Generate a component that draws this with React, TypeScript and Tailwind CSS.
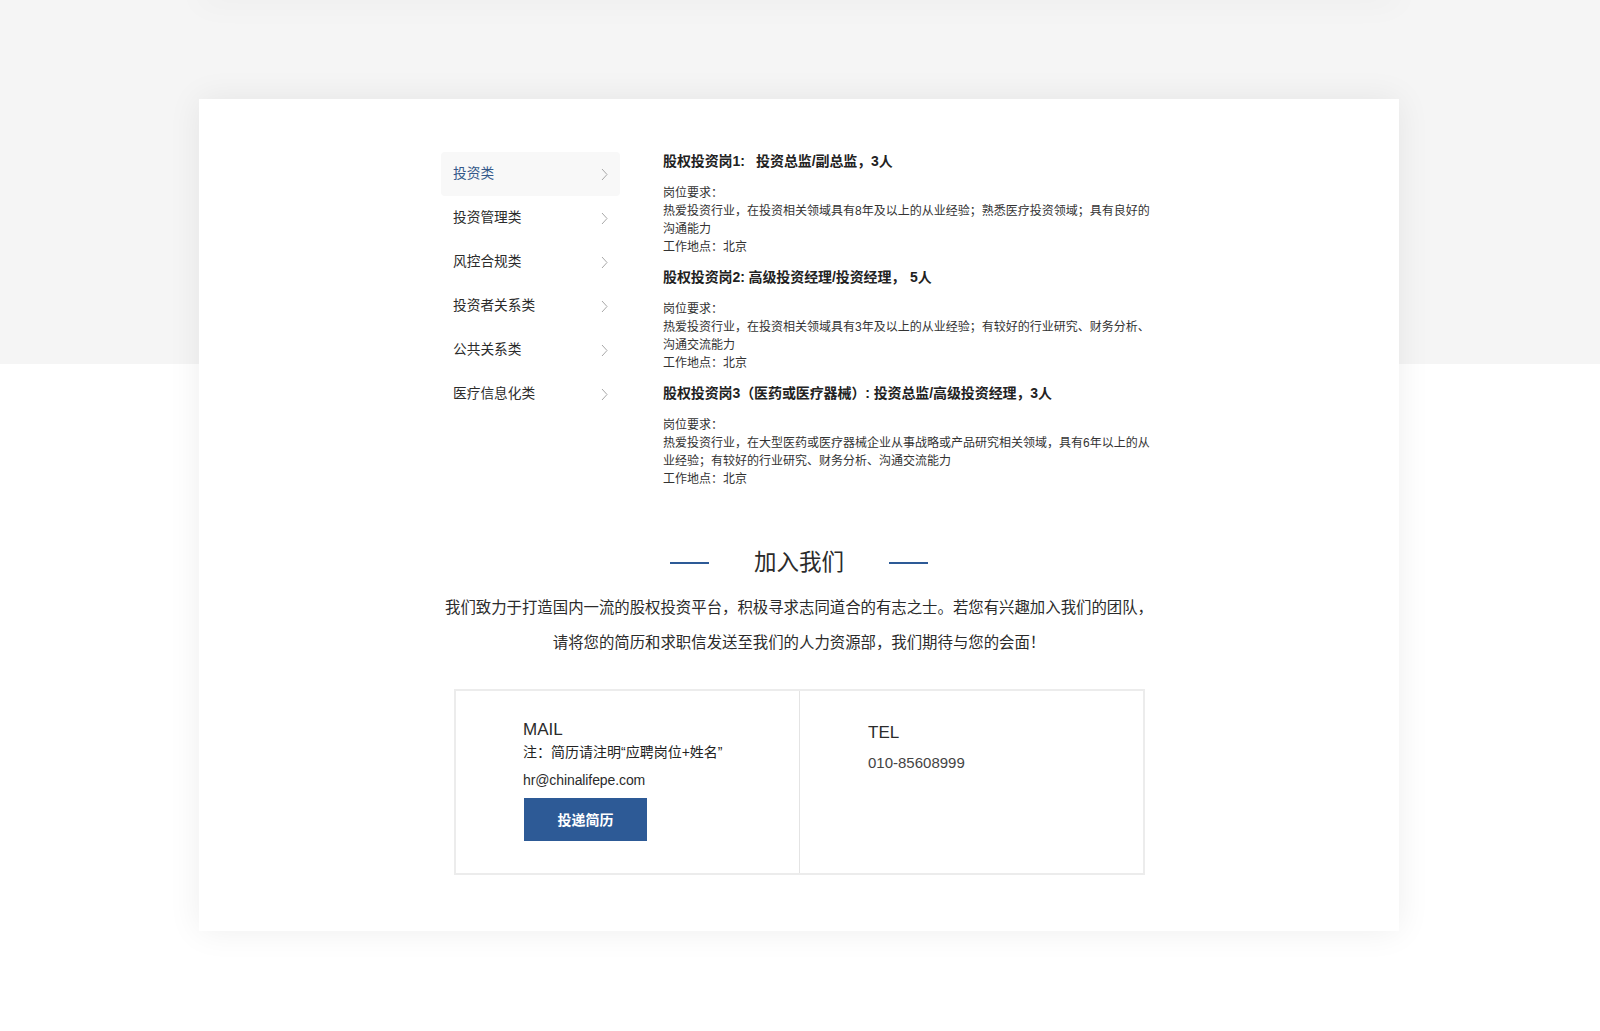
import React from 'react';

const categories = ['投资类', '投资管理类', '风控合规类', '投资者关系类', '公共关系类', '医疗信息化类'];

const jobs = [
  {
    title: '股权投资岗1:\u00a0\u00a0\u00a0投资总监/副总监，3人',
    lines: ['热爱投资行业，在投资相关领域具有8年及以上的从业经验；熟悉医疗投资领域；具有良好的沟通能力'],
  },
  {
    title: '股权投资岗2: 高级投资经理/投资经理，\u00a0\u200a5人',
    lines: ['热爱投资行业，在投资相关领域具有3年及以上的从业经验；有较好的行业研究、财务分析、沟通交流能力'],
  },
  {
    title: '股权投资岗3（医药或医疗器械）: 投资总监/高级投资经理，3人',
    lines: ['热爱投资行业，在大型医药或医疗器械企业从事战略或产品研究相关领域，具有6年以上的从业经验；有较好的行业研究、财务分析、沟通交流能力'],
  },
];

const Chevron = () => (
  <svg width="7" height="13" viewBox="0 0 7 13" fill="none" className="shrink-0">
    <polyline points="1,1 6,6.5 1,12" stroke="#a8a8a8" strokeWidth="1" />
  </svg>
);

const App: React.FC = () => {
  return (
    <div className="min-h-[1031px] overflow-hidden bg-[linear-gradient(#f5f5f5_364px,#ffffff_364px)] pb-[100px] font-['Liberation_Sans','Noto_Sans_CJK_SC',sans-serif] text-[#333]">
      {/* bottom edge of the card above */}
      <div className="-mt-[10px] ml-[199px] h-[10px] w-[1200px] bg-white shadow-[0_0_32px_rgba(0,0,0,0.07)]" />

      <div className="mt-[99px] ml-[199px] h-[832px] w-[1200px] bg-white pt-[53px] shadow-[0_0_32px_rgba(0,0,0,0.07)]">
        <div className="flex pl-[242px]">
          <ul className="w-[179px]">
            {categories.map((name, i) => (
              <li
                key={name}
                className={`flex h-[44px] items-center justify-between rounded-sm pl-3 pr-3 text-[13.7px] ${
                  i === 0 ? 'bg-[#f8f8f8] text-[#34588a]' : 'text-[#2b2b2b]'
                }`}
              >
                <span>{name}</span>
                <Chevron />
              </li>
            ))}
          </ul>

          <div className="ml-[43px] -mt-px w-[491px]">
            {jobs.map((job) => (
              <div key={job.title} className="mb-[11px]">
                <h3 className="mb-[13px] text-sm leading-5 font-bold tracking-[-0.1px] text-[#222]">{job.title}</h3>
                <div className="text-xs leading-[18px] text-[#333]">
                  <p>岗位要求：</p>
                  {job.lines.map((line) => (
                    <p key={line}>{line}</p>
                  ))}
                  <p>工作地点：北京</p>
                </div>
              </div>
            ))}
          </div>
        </div>

        <div className="mt-[48px] flex items-center justify-center gap-[44.5px]">
          <span className="h-0.5 w-[39px] bg-[#2d5a96]" />
          <h2 className="text-[22.5px] leading-8 text-[#2b2b2b]">加入我们</h2>
          <span className="h-0.5 w-[39px] bg-[#2d5a96]" />
        </div>

        <div className="mt-[11px] text-center text-[15.4px] leading-[35px] text-[#2b2b2b]">
          <p>我们致力于打造国内一流的股权投资平台，积极寻求志同道合的有志之士。若您有兴趣加入我们的团队，</p>
          <p>请将您的简历和求职信发送至我们的人力资源部，我们期待与您的会面！</p>
        </div>

        <div className="mt-[29px] ml-[255px] flex h-[186px] w-[691px] border-2 border-[#ececec]">
          <div className="w-[344px] border-r border-[#e4e4e4] pl-[67px] pt-[27px]">
            <div className="text-[17px] leading-6 text-[#2b2b2b]">MAIL</div>
            <div className="-mt-[2px] text-sm leading-6 text-[#222]">注：简历请注明“应聘岗位+姓名”</div>
            <div className="mt-[4px] text-sm leading-6 tracking-[-0.1px] text-[#2b2b2b]">hr@chinalifepe.com</div>
            <button className="mt-[6px] ml-px h-[43px] w-[123px] bg-[#2d5a96] text-sm font-bold text-white">投递简历</button>
          </div>
          <div className="flex-1 pl-[68px] pt-[30px]">
            <div className="text-[17px] leading-6 text-[#2b2b2b]">TEL</div>
            <div className="mt-[6px] text-[15px] leading-6 text-[#444]">010-85608999</div>
          </div>
        </div>
      </div>
    </div>
  );
};

export default App;
